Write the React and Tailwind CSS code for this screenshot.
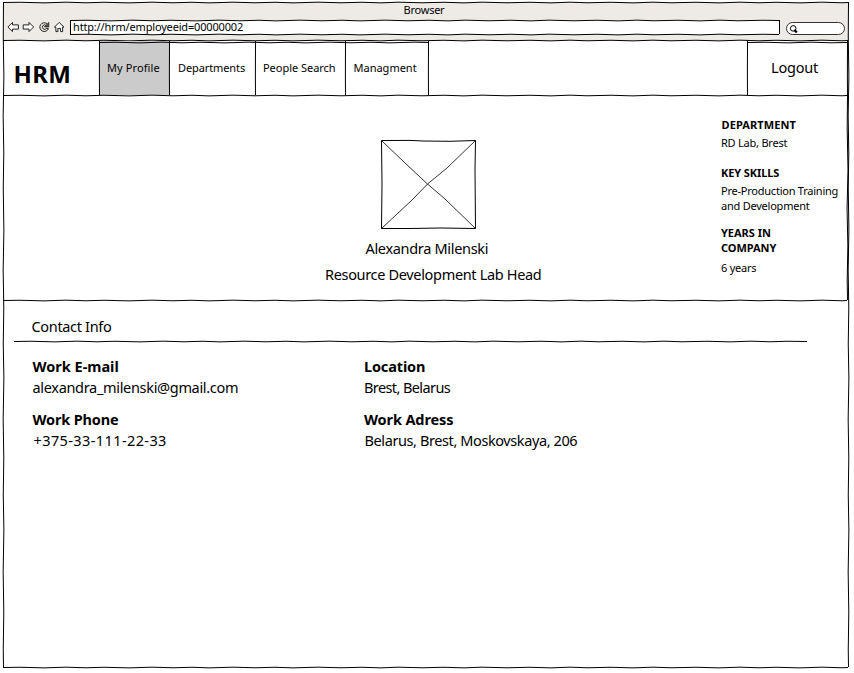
// Hand-drawn stroke path: gently alternates around the axis.
function sketchPath(length, vertical, amp) {
  const step = vertical ? 34 : 17;
  let d = "M" + (vertical ? "1.5 0" : "0 1.5");
  let i = 0;
  for (let p = step; p < length; p += step + ((i * 7) % 9)) {
    const off = 1.5 + (i % 2 ? amp : -amp) * (0.6 + ((i * 3) % 4) / 8);
    d += " L" + (vertical ? `${off} ${p}` : `${p} ${off}`);
    i++;
  }
  return d + " L" + (vertical ? `1.5 ${length}` : `${length} 1.5`);
}

function Stroke({ length, vertical = false, amp = 0.4, className = "" }) {
  return (
    <svg
      className={`pointer-events-none absolute overflow-visible ${className}`}
      width={vertical ? 3 : length}
      height={vertical ? length : 3}
      fill="none"
      stroke="#000"
      strokeWidth="1"
      aria-hidden="true"
    >
      <path d={sketchPath(length, vertical, amp)} />
    </svg>
  );
}

function BrowserIcons() {
  return (
    <svg width="60" height="14" viewBox="0 0 60 14" fill="none" stroke="#222" strokeWidth="1" aria-hidden="true">
      <path fill="#fff" d="M.9 7 5.5 2.4V4.9H11.4V9.1H5.5V11.6Z" />
      <path fill="#fff" d="M26.6 7 22 2.4V4.9H16.2V9.1H22V11.6Z" />
      <path d="M39.9 3.6A4.4 4.4 0 1 0 41.4 8.6M39.2 5.6A2.2 2.2 0 1 0 39.4 8.4H41.4" />
      <path strokeWidth=".8" fill="#555" d="M41.8 2.4V6.9H37.4Z" />
      <path fill="#fff" d="M47.4 7.2 52.2 2.4 57 7.2H55.6V11.6H53.6V8.4H50.9V11.6H48.9V7.2Z" />
    </svg>
  );
}

function Tab({ children, active, className }) {
  return (
    <div className={`relative h-full shrink-0 pt-[19px] text-[11px] leading-4 ${active ? "bg-[#cbcbcb]" : ""} ${className}`}>
      <Stroke vertical length={54} amp={0.2} className="-left-[1.5px] top-0" />
      {children}
    </div>
  );
}

function Contact({ title, value, titleClass = "", valueClass = "" }) {
  return (
    <div className="h-[53px] text-[14.5px] leading-[21px]">
      <div className={`font-bold ${titleClass}`}>{title}</div>
      <div className={valueClass}>{value}</div>
    </div>
  );
}

export default function App() {
  return (
    <div className="h-[673px] w-[854px] overflow-hidden bg-white pl-[3px] pt-[2px] font-['Noto_Sans',sans-serif] text-black">
      <div className="relative flex h-[666px] w-[846px] flex-col whitespace-nowrap">
        <header className="relative h-[39px] bg-[#eeebe7]">
          <div className="pr-[4px] text-center text-[11px] leading-4 tracking-[-0.25px]">Browser</div>
          <div className="flex items-start">
            <div className="ml-1 mt-[2px]"><BrowserIcons /></div>
            <div className="relative ml-[3px] mt-[2px] h-[15px] w-[710px] bg-white pl-[3px] text-[11px] leading-[13px] tracking-[-0.17px]">
              http://hrm/employeeid=00000002
              <Stroke length={709} className="left-0 -top-[1px]" />
              <Stroke length={709} className="left-0 top-[13px]" />
              <Stroke vertical length={14} amp={0.2} className="-left-[1px] top-0" />
              <Stroke vertical length={14} amp={0.2} className="left-[708px] top-0" />
            </div>
            <div className="ml-[6px] mt-[4px] flex h-[13px] w-[59px] items-center rounded-full border border-[#333] bg-white pl-[2px]">
              <svg width="10" height="10" viewBox="0 0 10 10" fill="none" stroke="#000" aria-hidden="true">
                <circle cx="4.2" cy="4.4" r="2.8" />
                <path strokeWidth="2.2" d="m5.4 5.8 2.4 2.6" />
              </svg>
            </div>
          </div>
          <Stroke length={845} className="left-0 top-[37px]" />
        </header>

        <nav className="relative flex h-[54px]">
          <div className="w-[96px] pl-[10.5px] pt-[17px] text-[24px] font-bold leading-8 tracking-[0.3px]">HRM</div>
          <Tab active className="w-[70.5px] pl-[8px] tracking-[0.1px]">My Profile</Tab>
          <Tab className="w-[85.5px] pl-[8.5px] tracking-[-0.1px]">Departments</Tab>
          <Tab className="w-[90.5px] pl-[8px] tracking-[-0.03px]">People Search</Tab>
          <Tab className="w-[83px] pl-[8px]">Managment</Tab>
          <div className="relative flex-1">
            <Stroke vertical length={54} amp={0.2} className="-left-[1.5px] top-0" />
          </div>
          <div className="relative w-[101.5px] pl-[23.5px] pt-[16px] text-[14.5px] leading-5 tracking-[-0.2px]">
            Logout
            <Stroke vertical length={54} amp={0.2} className="-left-[1.5px] top-0" />
            <Stroke vertical length={54} amp={0.2} className="left-[98.5px] top-0" />
          </div>
          <Stroke length={330} amp={0.4} className="left-[96px] top-[0px]" />
          <Stroke length={99} amp={0.4} className="left-[745px] top-[0px]" />
          <Stroke length={844} className="left-0 top-[53px]" />
        </nav>

        <section className="relative flex h-[205px]">
          <div className="flex w-[717px] flex-col pt-[44px]">
            <svg className="ml-[377px] shrink-0" width="97" height="91" viewBox="0 0 97 91" fill="none" stroke="#000" aria-hidden="true">
              <path d="M1.5 1.5 30 1.4 43 2 70 2.3 95.5 1.5 95 30 95.5 89.5 60 89 30 89.5 1.5 89.5 2 45Z" />
              <path strokeWidth=".8" d="M1.5 1.5 25 24 47.5 45 65 60 95.5 89.5M95.5 1.5 67 29 47.5 45 32 61 1.5 89.5" />
            </svg>
            <div className="pl-[362.5px] pt-[8px] text-[14.5px] leading-5 tracking-[-0.32px]">Alexandra Milenski</div>
            <div className="pl-[322px] pt-[6px] text-[14.5px] leading-5 tracking-[-0.33px]">Resource Development Lab Head</div>
          </div>
          <aside className="pl-[1px] pt-[22px] text-[11px] leading-[15px] tracking-[-0.23px]">
            <div className="pl-[0.5px] font-bold tracking-[0.1px]">DEPARTMENT</div>
            <div className="mt-[3px]">RD Lab, Brest</div>
            <div className="mt-[15px] font-bold tracking-[-0.1px]">KEY SKILLS</div>
            <div className="mt-[3px]">Pre-Production Training</div>
            <div>and Development</div>
            <div className="mt-[12px] font-bold tracking-[-0.02px]">YEARS IN</div>
            <div className="font-bold tracking-[-0.05px]">COMPANY</div>
            <div className="mt-[5px]">6 years</div>
          </aside>
          <Stroke length={844} className="left-0 top-[204px]" />
          <Stroke vertical length={205} amp={0.5} className="left-[842.5px] top-0" />
        </section>

        <section className="pt-[16px]">
          <h2 className="relative h-[26px] pl-[28.5px] text-[14.5px] leading-5 tracking-[-0.33px]">
            Contact Info
            <Stroke length={793} className="left-[11px] top-[24px]" />
          </h2>
          <div className="flex pl-[29.5px] pt-[14px]">
            <div className="w-[331.5px]">
              <Contact title="Work E-mail" value="alexandra_milenski@gmail.com" valueClass="tracking-[-0.32px]" />
              <Contact title="Work Phone" value="+375-33-111-22-33" titleClass="tracking-[-0.17px]" valueClass="pl-[1px] tracking-[0.4px]" />
            </div>
            <div>
              <Contact title="Location" value="Brest, Belarus" titleClass="tracking-[-0.15px]" valueClass="tracking-[-0.6px]" />
              <Contact title="Work Adress" value="Belarus, Brest, Moskovskaya, 206" titleClass="tracking-[-0.12px]" valueClass="pl-[0.5px] tracking-[-0.4px]" />
            </div>
          </div>
        </section>

        <Stroke length={845} className="left-0 -top-[1px]" />
        <Stroke vertical length={665} className="-left-[1px] top-0" />
        <Stroke vertical length={665} className="left-[844px] top-0" />
        <Stroke length={845} className="left-0 top-[664px]" />
      </div>
    </div>
  );
}
